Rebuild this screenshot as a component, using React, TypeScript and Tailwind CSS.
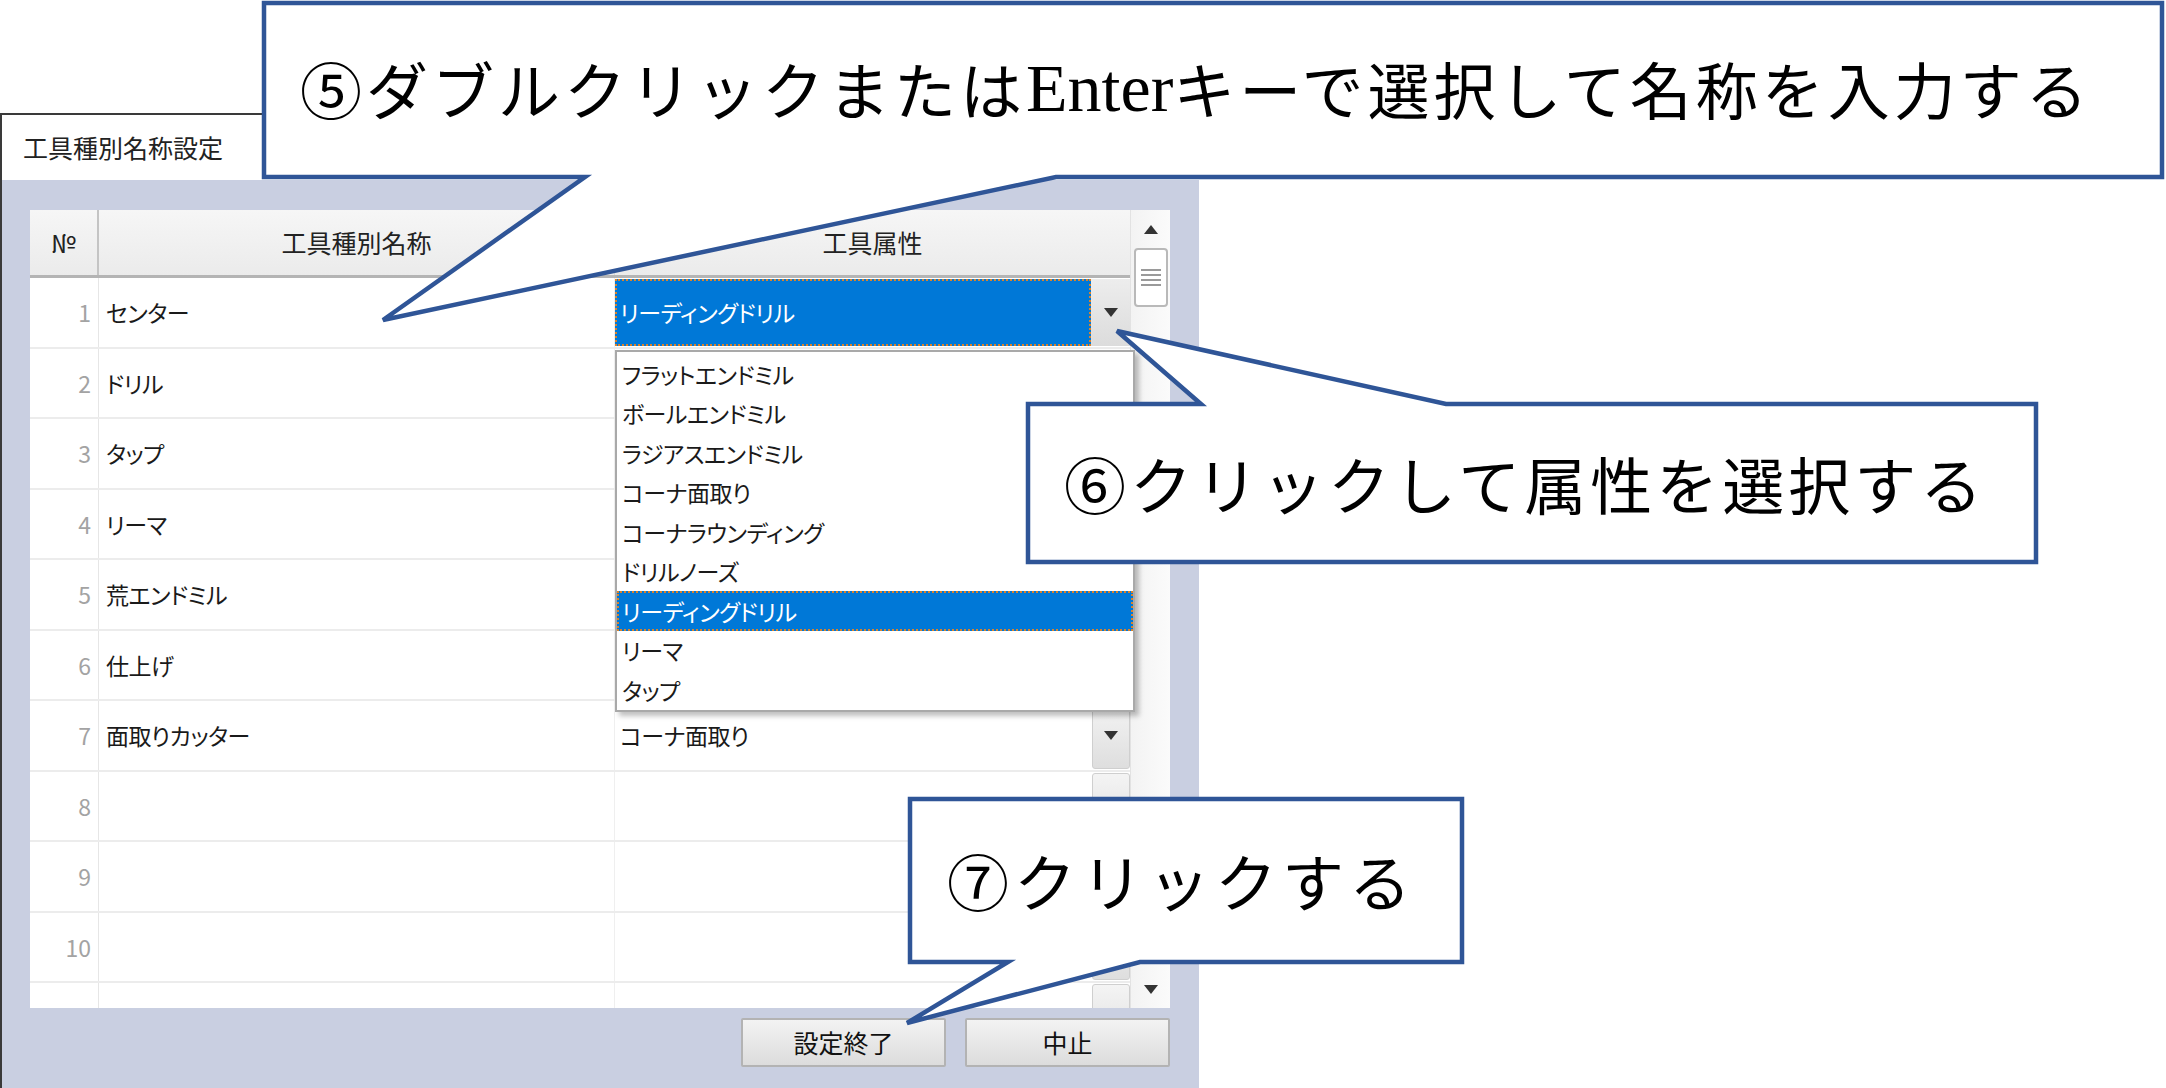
import React from "react";

const jp = "font-['Noto_Sans_CJK_JP','Noto_Sans',sans-serif] [font-feature-settings:'palt']";

const names = ["センター", "ドリル", "タップ", "リーマ", "荒エンドミル", "仕上げ", "面取りカッター", "", "", "", ""];

const options = [
  "フラットエンドミル",
  "ボールエンドミル",
  "ラジアスエンドミル",
  "コーナ面取り",
  "コーナラウンディング",
  "ドリルノーズ",
  "リーディングドリル",
  "リーマ",
  "タップ",
];

function Down({ className = "" }: { className?: string }) {
  return (
    <svg width="14" height="9" viewBox="0 0 14 9" className={className}>
      <polygon points="0,0 14,0 7,9" fill="#333" />
    </svg>
  );
}

function Up() {
  return (
    <svg width="14" height="9" viewBox="0 0 14 9">
      <polygon points="0,9 14,9 7,0" fill="#333" />
    </svg>
  );
}

function ComboButton({ arrow }: { arrow?: boolean }) {
  return (
    <div className="w-[38px] h-full rounded-[3px] border border-[#cfcfcf] bg-gradient-to-b from-[#f4f4f4] to-[#dedede] flex items-center justify-center">
      {arrow && <Down />}
    </div>
  );
}

function Row({ i, name }: { i: number; name: string }) {
  return (
    <div className="h-[70.5px] shrink-0 flex border-b-2 border-[#ececec]">
      <div className="w-[69px] shrink-0 flex items-center justify-end pr-[7px] text-[23px] text-[#a3a3a3] border-r border-[#e6e6e6]">
        {i < 10 ? i + 1 : ""}
      </div>
      <div className="w-[516px] shrink-0 flex items-center pl-[7px] text-[23px] tracking-[-0.5px] text-[#1a1a1a] border-r border-[#efefef]">
        {name}
      </div>
      <div className="w-[515px] shrink-0 flex items-stretch py-[1px]">
        {i === 0 ? (
          <>
            <div className="flex-1 bg-[#0078d7] outline-2 outline-dotted outline-[#d9822b] -outline-offset-2 flex items-center pl-[5px] text-[23px] tracking-[-0.5px] text-white">
              リーディングドリル
            </div>
            <div className="w-[39px] bg-gradient-to-b from-[#ededed] to-[#dcdcdc] flex items-center justify-center">
              <Down />
            </div>
          </>
        ) : (
          <>
            <div className="flex-1 flex items-center pl-[5px] text-[23px] tracking-[-0.5px] text-[#1a1a1a]">
              {i === 6 ? "コーナ面取り" : ""}
            </div>
            <ComboButton arrow={i === 6} />
          </>
        )}
      </div>
    </div>
  );
}

export default function App() {
  return (
    <div className={`relative w-[2166px] h-[1088px] bg-white overflow-hidden ${jp}`}>
      {/* Dialog */}
      <div className="pt-[113px]">
        <div className="w-[1199px] h-[975px] border-l-2 border-t-2 border-[#3a3a3a] flex flex-col">
          <div className="h-[65px] shrink-0 bg-white flex items-center pl-[21px] text-[25px] text-[#222]">
            工具種別名称設定
          </div>
          <div className="flex-1 bg-[#c9cfe1] pl-[28px] pt-[30px]">
            <div className="relative w-[1140px] h-[798px] bg-white flex overflow-hidden">
              <div className="w-[1100px] flex flex-col">
                {/* Header */}
                <div className="h-[68px] shrink-0 flex bg-gradient-to-b from-[#f6f6f6] to-[#ebebeb] border-b-[3px] border-[#b4b4b4] text-[25px] text-[#222]">
                  <div className="w-[69px] shrink-0 flex items-center justify-center border-r-2 border-[#c4c4c4]">№</div>
                  <div className="w-[516px] shrink-0 flex items-center justify-center border-r border-[#d8d8d8]">工具種別名称</div>
                  <div className="w-[515px] shrink-0 flex items-center justify-center">工具属性</div>
                </div>
                {names.map((n, i) => (
                  <Row key={i} i={i} name={n} />
                ))}
              </div>

              {/* Scrollbar */}
              <div className="w-[40px] shrink-0 flex flex-col items-center bg-gradient-to-r from-[#f3f3f3] to-[#fbfbfb] border-l border-[#e2e2e2]">
                <div className="h-[38px] flex items-center justify-center">
                  <Up />
                </div>
                <div className="w-[34px] h-[59px] rounded-[4px] border-2 border-[#b9b9b9] bg-white flex flex-col items-center justify-center gap-[3px]">
                  <div className="w-[20px] h-[2px] bg-[#9a9a9a]" />
                  <div className="w-[20px] h-[2px] bg-[#9a9a9a]" />
                  <div className="w-[20px] h-[2px] bg-[#9a9a9a]" />
                  <div className="w-[20px] h-[2px] bg-[#9a9a9a]" />
                </div>
                <div className="flex-1" />
                <div className="h-[38px] flex items-center justify-center">
                  <Down />
                </div>
              </div>

              {/* Dropdown list */}
              <div className="absolute left-[585px] top-[140px] w-[520px] h-[362px] bg-white border-2 border-[#a9a9a9] shadow-[4px_4px_5px_rgba(0,0,0,0.25)] pt-[2px] flex flex-col">
                {options.map((o, i) => (
                  <div
                    key={o}
                    className={
                      i === 6
                        ? "h-[39.5px] shrink-0 flex items-center pl-[5px] text-[23px] tracking-[-0.5px] bg-[#0078d7] text-white outline-2 outline-dotted outline-[#d9822b] -outline-offset-2"
                        : "h-[39.5px] shrink-0 flex items-center pl-[5px] text-[23px] tracking-[-0.5px] text-[#1a1a1a]"
                    }
                  >
                    {o}
                  </div>
                ))}
              </div>
            </div>

            {/* Buttons */}
            <div className="w-[1140px] mt-[10px] flex justify-end gap-[19px]">
              <button className="w-[205px] h-[49px] rounded-[2px] border-2 border-[#b3b3b3] bg-gradient-to-b from-[#f3f3f3] to-[#dcdcdc] text-[25px] text-[#111]">
                設定終了
              </button>
              <button className="w-[205px] h-[49px] rounded-[2px] border-2 border-[#b3b3b3] bg-gradient-to-b from-[#f3f3f3] to-[#dcdcdc] text-[25px] text-[#111]">
                中止
              </button>
            </div>
          </div>
        </div>
      </div>

      {/* Callout shapes */}
      <svg className="absolute inset-0 pointer-events-none" width="2166" height="1088" viewBox="0 0 2166 1088">
        <path d="M264,3 H2162 V177 H1056 L383,320 L585,177 H264 Z" fill="#fff" stroke="#2f5597" strokeWidth="4.5" strokeLinejoin="miter" />
        <path d="M1028,404 H1201 L1117,331 L1446,404 H2036 V562 H1028 Z" fill="#fff" stroke="#2f5597" strokeWidth="4.5" />
        <path d="M910,799 H1462 V962 H1140 L907,1023 L1008,962 H910 Z" fill="#fff" stroke="#2f5597" strokeWidth="4.5" />
      </svg>

      {/* Callout texts */}
      <div className="absolute left-[300px] top-[48px] h-[80px] flex items-center text-[62px] leading-none text-black tracking-[4px] whitespace-nowrap [font-feature-settings:normal]">
        ⑤ダブルクリックまたは
        <span className="font-['Liberation_Serif',serif] text-[68px] tracking-normal">Enter</span>
        キーで選択して名称を入力する
      </div>
      <div className="absolute left-[1064px] top-[443px] h-[80px] flex items-center text-[62px] leading-none text-black tracking-[4px] whitespace-nowrap [font-feature-settings:normal]">
        ⑥クリックして属性を選択する
      </div>
      <div className="absolute left-[947px] top-[840px] h-[80px] flex items-center text-[62px] leading-none text-black tracking-[5px] whitespace-nowrap [font-feature-settings:normal]">
        ⑦クリックする
      </div>
    </div>
  );
}
